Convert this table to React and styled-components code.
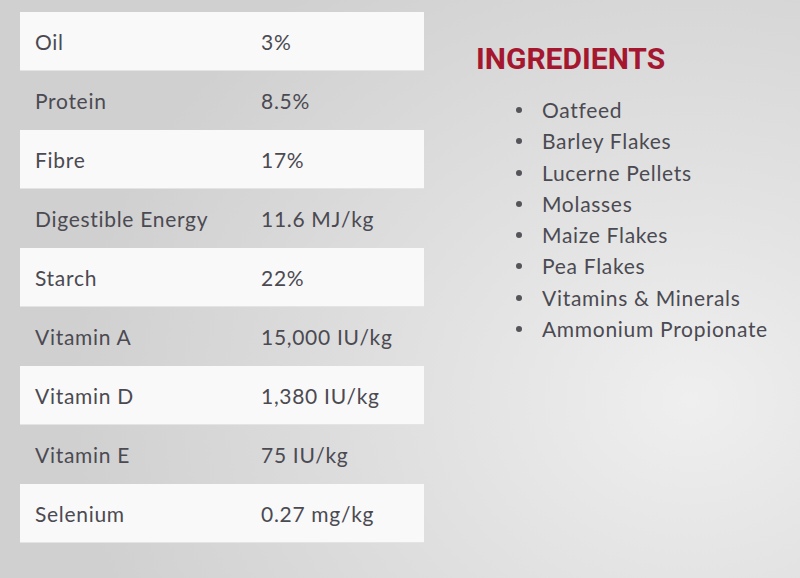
import React from 'react'
import styled, { createGlobalStyle } from 'styled-components'

const GlobalStyle = createGlobalStyle`
    html, body {
        margin: 0;
        padding: 0;
    }
    body {
        font-family: Lato, "Open Sans", sans-serif;
        background: #d2d2d2;
    }
`

const Page = styled.div`
    width: 800px;
    height: 578px;
    box-sizing: border-box;
    padding: 12px 0 0 20px;
    display: flex;
    flex-direction: row;
    align-items: flex-start;
    gap: 52px;
    background: radial-gradient(ellipse 620px 520px at 690px 400px, #efefef 0%, #e2e2e2 40%, #d0d0d0 100%);
    overflow: hidden;
`
const Table = styled.div`
    width: 404px;
    display: flex;
    flex-direction: column;
`
const Row = styled.div`
    height: 59px;
    display: grid;
    grid-template-columns: 226px 1fr;
    align-items: center;
    padding-left: 15px;
    background: ${props => props.$striped ? '#f9f9f9' : 'transparent'};
    border-bottom: 1px solid ${props => props.$striped ? '#e4e4e4' : 'transparent'};
    box-sizing: border-box;
`
const Cell = styled.span`
    font-size: 21px;
    letter-spacing: 0.7px;
    color: #4b4a52;
`
const Ingredients = styled.div`
    display: flex;
    flex-direction: column;
    padding-top: 29px;
`
const Heading = styled.h2`
    margin: 0;
    font-family: Roboto, "Liberation Sans", sans-serif;
    font-weight: 700;
    font-size: 30px;
    line-height: 36px;
    color: #a4172f;
`
const List = styled.ul`
    list-style: none;
    margin: 17px 0 0;
    padding: 0 0 0 66px;
`
const Item = styled.li`
    position: relative;
    font-size: 21px;
    letter-spacing: 0.7px;
    line-height: 31.3px;
    color: #4b4a52;

    &::before {
        content: '';
        position: absolute;
        left: -26px;
        top: 13px;
        width: 6px;
        height: 6px;
        border-radius: 50%;
        background: #55545a;
    }
`

const analysis = [
    ['Oil', '3%'],
    ['Protein', '8.5%'],
    ['Fibre', '17%'],
    ['Digestible Energy', '11.6 MJ/kg'],
    ['Starch', '22%'],
    ['Vitamin A', '15,000 IU/kg'],
    ['Vitamin D', '1,380 IU/kg'],
    ['Vitamin E', '75 IU/kg'],
    ['Selenium', '0.27 mg/kg'],
]

const ingredients = [
    'Oatfeed',
    'Barley Flakes',
    'Lucerne Pellets',
    'Molasses',
    'Maize Flakes',
    'Pea Flakes',
    'Vitamins & Minerals',
    'Ammonium Propionate',
]

const App = () => {
    return (
        <>
            <GlobalStyle />
            <Page>
                <Table>
                    {analysis.map(([name, value], i) => (
                        <Row key={name} $striped={i % 2 === 0}>
                            <Cell>{name}</Cell>
                            <Cell>{value}</Cell>
                        </Row>
                    ))}
                </Table>
                <Ingredients>
                    <Heading>INGREDIENTS</Heading>
                    <List>
                        {ingredients.map(item => <Item key={item}>{item}</Item>)}
                    </List>
                </Ingredients>
            </Page>
        </>
    )
}

export default App
